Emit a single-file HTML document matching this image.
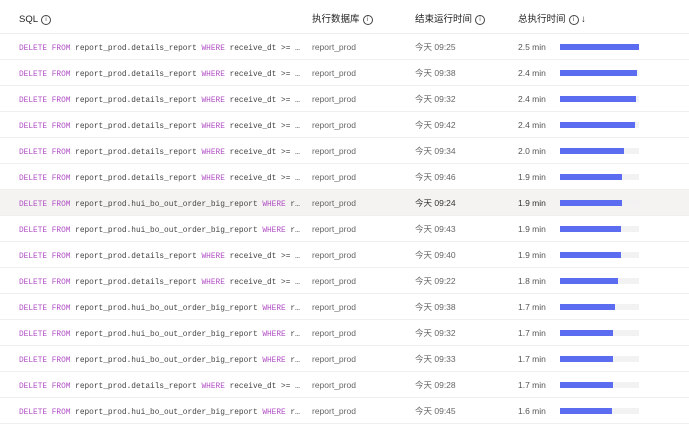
<!DOCTYPE html>
<html><head><meta charset="utf-8"><style>
body{margin:0;width:689px;height:427px;background:#fff;overflow:hidden;font-family:"Liberation Sans","Noto Sans CJK SC",sans-serif;}
.h{position:absolute;top:0;height:33px;left:0;width:689px;border-bottom:1px solid #eeeeee;font-size:9.5px;color:#222;}
.h span{position:absolute;top:14px;line-height:11px;display:flex;align-items:center;}
.i{display:inline-block;width:8px;height:8px;border:1px solid #444;border-radius:50%;font-size:6px;line-height:8px;text-align:center;margin-left:3px;color:#444;font-style:normal;}
.r{position:absolute;left:0;width:689px;height:25px;border-bottom:1px solid #efefef;font-size:8.5px;color:#666;}
.r.hl{background:#f4f3f1;}
.r>*{position:absolute;top:8px;line-height:10px;}
.sql{left:19px;font-family:"Liberation Mono",monospace;font-size:7.8px;color:#444;top:10px;white-space:pre;}
.k{color:#b04fc4;}
.db{left:312px;}
.t{left:415px;}
.d{left:518px;color:#555;}
.hl .t,.hl .d{color:#333;}
.tr{left:560px;top:10px;width:79px;height:6px;background:#f2f2f2;}
.b{position:absolute;left:0;top:0;height:6px;background:#5b6cf0;}
</style></head><body>
<div class="h"><span style="left:19px">SQL<i class="i">i</i></span><span style="left:312px">执行数据库<i class="i">i</i></span><span style="left:415px">结束运行时间<i class="i">i</i></span><span style="left:518px">总执行时间<i class="i">i</i>&nbsp;↓</span></div>
<div id="rows"></div>
<script>
var D=[["d","09:25","2.5",79],["d","09:38","2.4",77],["d","09:32","2.4",76],["d","09:42","2.4",75],["d","09:34","2.0",64],["d","09:46","1.9",62],["h","09:24","1.9",62],["h","09:43","1.9",61],["d","09:40","1.9",61],["d","09:22","1.8",58],["h","09:38","1.7",55],["h","09:32","1.7",53],["h","09:33","1.7",53],["d","09:28","1.7",53],["h","09:45","1.6",52]];
var s="";
D.forEach(function(r,i){
var q=r[0]=="d"?'<span class="k">DELETE FROM</span> report_prod.details_report <span class="k">WHERE</span> receive_dt &gt;= …':'<span class="k">DELETE FROM</span> report_prod.hui_bo_out_order_big_report <span class="k">WHERE</span> r…';
s+='<div class="r'+(i==6?' hl':'')+'" style="top:'+(34+i*26)+'px"><span class="sql">'+q+'</span><span class="db">report_prod</span><span class="t">今天 '+r[1]+'</span><span class="d">'+r[2]+' min</span><div class="tr"><div class="b" style="width:'+r[3]+'px"></div></div></div>';
});
document.getElementById("rows").innerHTML=s;
</script>
</body></html>
